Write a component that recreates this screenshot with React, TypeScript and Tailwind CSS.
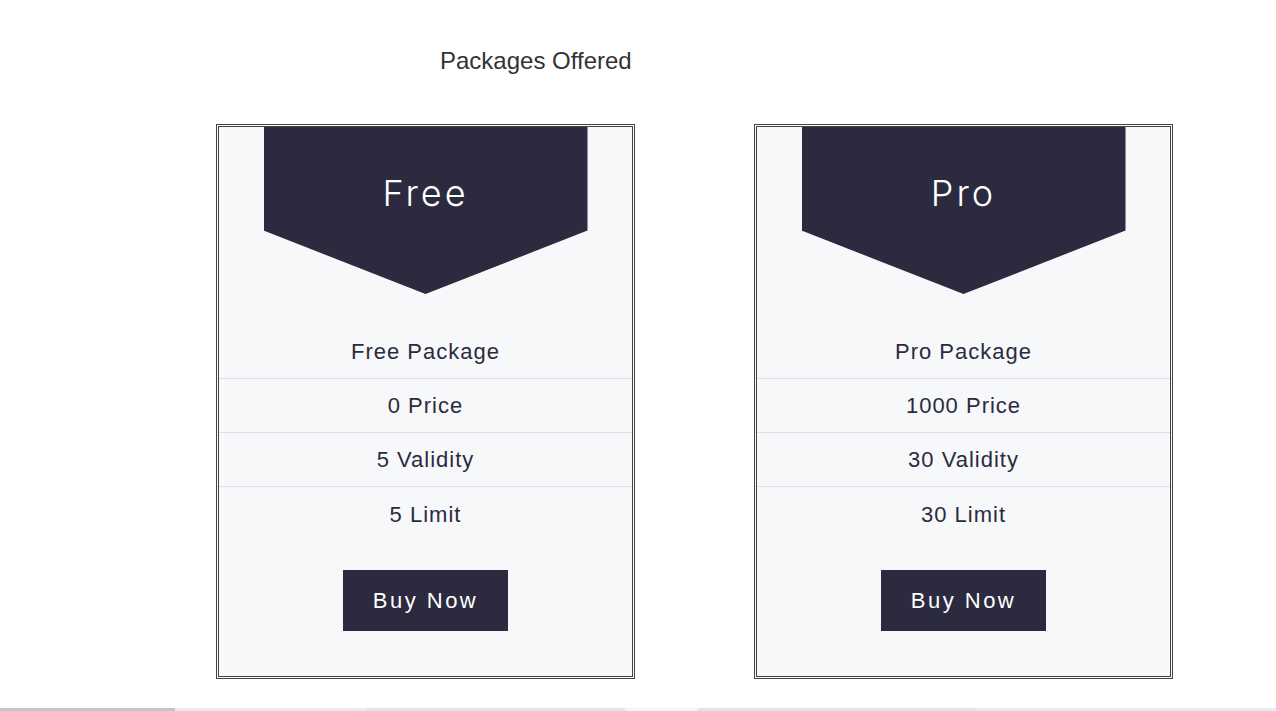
import React from "react";

type Pkg = {
  name: string;
  title: string;
  price: number;
  validity: number;
  limit: number;
};

const packages: Pkg[] = [
  { name: "Free", title: "Free Package", price: 0, validity: 5, limit: 5 },
  { name: "Pro", title: "Pro Package", price: 1000, validity: 30, limit: 30 },
];

function PackageCard({ pkg }: { pkg: Pkg }) {
  const rows = [pkg.title, `${pkg.price} Price`, `${pkg.validity} Validity`, `${pkg.limit} Limit`];
  return (
    <div className="w-[419px] h-[555px] border-[3px] border-double border-[#444] bg-[#f7f8fa] flex flex-col items-center">
      <div className="w-[324px] h-[167px] bg-[#2c2a3f] [clip-path:polygon(0_0,100%_0,100%_62%,50%_100%,0_62%)] flex justify-center pt-[44px]">
        <span className="text-white text-[36px] leading-[44px] font-light tracking-[3px] font-['Inter',sans-serif]">
          {pkg.name}
        </span>
      </div>
      <div className="w-full mt-[31px]">
        {rows.map((r, i) => (
          <div
            key={i}
            className={`h-[54px] flex items-center justify-center text-[22px] tracking-[1px] text-[#2c2a3f] ${
              i < rows.length - 1 ? "border-b border-[#dddfe2]" : ""
            }`}
          >
            {r}
          </div>
        ))}
      </div>
      <button
        type="button"
        className="mt-[29px] w-[165px] h-[61px] bg-[#2c2a3f] text-white text-[22px] tracking-[2.5px]"
      >
        Buy Now
      </button>
    </div>
  );
}

export default function App() {
  return (
    <div className="h-[711px] w-full bg-white flex flex-col font-['Liberation_Sans',Arial,sans-serif] overflow-hidden">
      <h1 className="pt-[47px] ml-[440px] text-[24px] leading-[28px] text-[#333]">Packages Offered</h1>
      <div className="mt-[49px] pl-[216px] flex gap-[119px]">
        {packages.map((p) => (
          <PackageCard key={p.name} pkg={p} />
        ))}
      </div>
      <div className="mt-auto h-[3px] flex">
        <div className="w-[175px] bg-[#c6c6c6]" />
        <div className="w-[191px] bg-[#efe9ea]" />
        <div className="w-[259px] bg-[#e0e4e8]" />
        <div className="w-[73px] bg-[#f2f4f7]" />
        <div className="w-[277px] bg-[#dfe5e6]" />
        <div className="flex-1 bg-[#e8ecee]" />
      </div>
    </div>
  );
}
